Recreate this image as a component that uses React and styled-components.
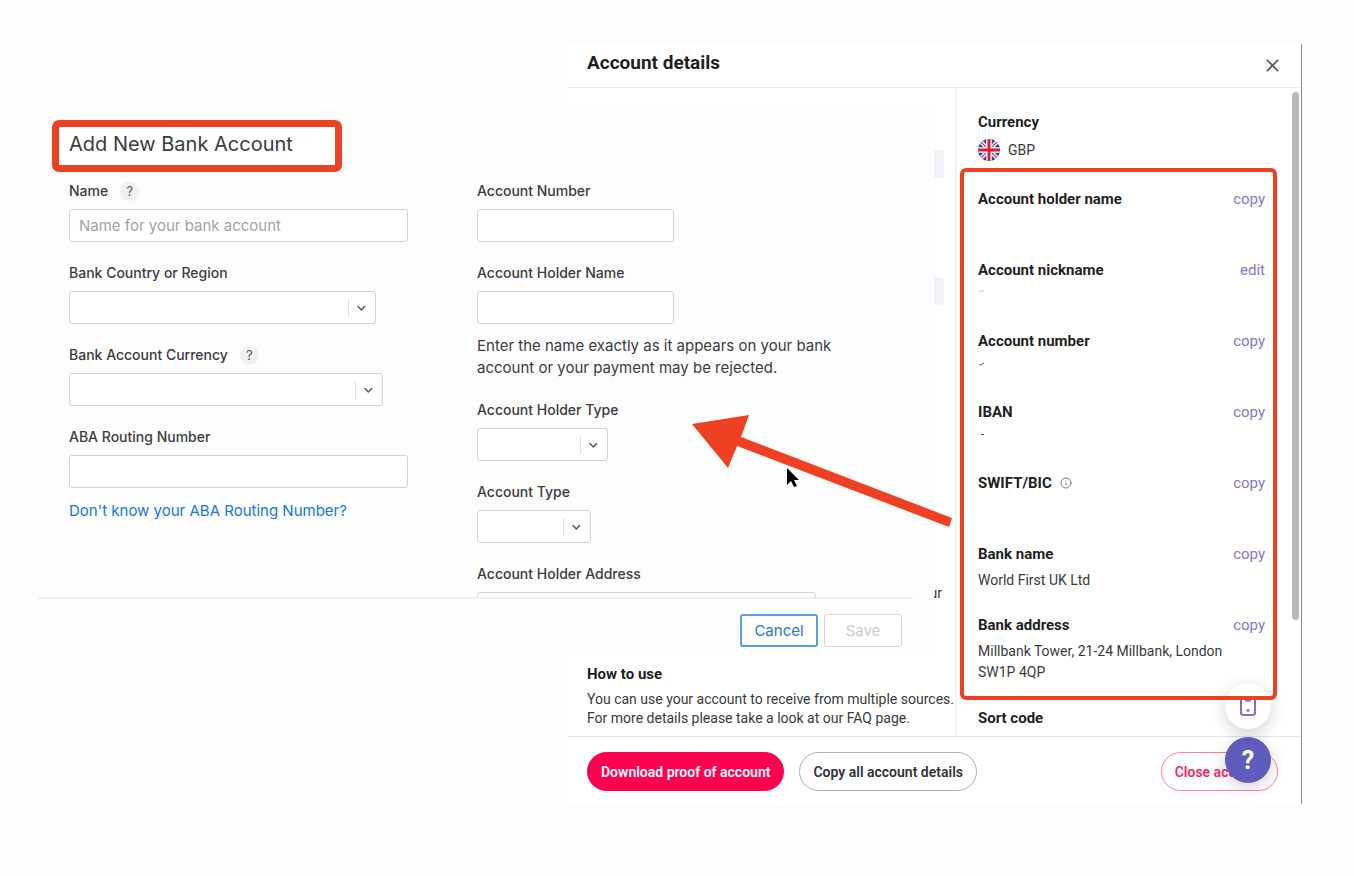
import styled, { createGlobalStyle } from "styled-components";
import { Info, X } from "lucide-react";

const GlobalStyle = createGlobalStyle`
  * {
    box-sizing: border-box;
  }

  body {
    margin: 0;
    background: #fdfdfd;
  }

  button,
  input,
  select {
    font: inherit;
    margin: 0;
  }
`;

const Stage = styled.main`
  position: relative;
  display: grid;
  grid-template-columns: 529fr 367fr 368fr;
  align-items: start;
  padding: 44px 52px 72px 38px;
`;

/* ---------- account details window ---------- */

const DetailsWindow = styled.section`
  position: relative;
  grid-column: 2 / 4;
  grid-row: 1;
  background: #fff;
  border-right: 1px solid #8a8a8a;
  font-family: Roboto, sans-serif;
  font-size: 14px;
  color: #3a3a3a;
`;

const DetailsHeader = styled.header`
  display: flex;
  align-items: center;
  justify-content: space-between;
  height: 44px;
  padding: 0 18px 0 20px;
  border-bottom: 1px solid #ececee;
`;

const DetailsTitle = styled.h1`
  margin: 0;
  padding-bottom: 6px;
  font-size: 19px;
  line-height: 24px;
  font-weight: 700;
  color: #1f1f1f;
`;

const CloseIcon = styled.button`
  display: flex;
  padding: 0;
  border: 0;
  background: none;
  color: #555;
`;

const DetailsBody = styled.div`
  display: grid;
  grid-template-columns: minmax(0, 1fr) 344px;
`;

const Summary = styled.div`
  display: flex;
  flex-direction: column;
  padding: 62px 11px 8px 20px;
  border-right: 2px solid #f3f3fa;
`;

const Skeleton = styled.div`
  height: 28px;
  margin-bottom: 99px;
  border-radius: 4px;
  background: #f2f1f8;
`;

const SummaryNote = styled.p`
  margin: auto 2px 61px 0;
  line-height: 20px;
  text-align: right;
`;

const SummaryTitle = styled.h2`
  margin: 0 0 6px;
  font-size: 15px;
  line-height: 20px;
  font-weight: 700;
  color: #1f1f1f;
`;

const SummaryText = styled.p`
  margin: 0;
  line-height: 19px;
  white-space: nowrap;
`;

const Sidebar = styled.aside`
  display: grid;
  grid-template-columns: 1fr 7px;
  column-gap: 15px;
  padding: 0 2px 8px 3px;
`;

const ScrollThumb = styled.div`
  height: 528px;
  margin-top: 4px;
  border-radius: 4px;
  background: #bababa;
`;

const SideBlock = styled.div`
  padding: ${(props) => props.$pad};
`;

const MarkedGroup = styled.div`
  position: relative;
  z-index: 2;
  display: flex;
  flex-direction: column;
  gap: 24px;
  margin-bottom: 8px;
  padding: 17px 8px 13px 14px;
  border: 4px solid #ee4023;
  border-radius: 6px;
`;

const FieldHead = styled.div`
  display: flex;
  align-items: center;
  gap: 8px;
  height: 20px;
  margin-bottom: ${(props) => (props.$last ? 0 : 6)}px;
`;

const FieldName = styled.h3`
  margin: 0;
  font-size: 15px;
  line-height: 20px;
  font-weight: 700;
  color: #1f1f1f;
`;

const FieldAction = styled.button`
  margin-left: auto;
  padding: 0;
  border: 0;
  background: none;
  font-size: 15px;
  line-height: 20px;
  color: #7f78d0;
`;

const FieldValue = styled.div`
  min-height: 21px;
  line-height: 21px;
`;

const Residue = styled.svg`
  display: block;
`;

const CurrencyValue = styled.div`
  display: flex;
  align-items: center;
  gap: 8px;
  height: 24px;
`;

const DetailsFooter = styled.footer`
  display: flex;
  gap: 15px;
  padding: 15px 23px 13px 20px;
  border-top: 1px solid #e4e4e6;
`;

const Pill = styled.button`
  height: 39px;
  padding: 0 13px;
  border: 1px solid ${(props) => props.$border};
  border-radius: 20px;
  background: ${(props) => props.$fill || "#fff"};
  color: ${(props) => props.$color};
  font-weight: 600;
  white-space: nowrap;
`;

const ClosePill = styled(Pill)`
  margin-left: auto;
`;

const FloatingTools = styled.div`
  position: absolute;
  right: 30px;
  bottom: 21px;
  display: flex;
  flex-direction: column;
  gap: 8px;
`;

const RoundTool = styled.button`
  display: flex;
  align-items: center;
  justify-content: center;
  width: 46px;
  height: 46px;
  padding: 0;
  border: 0;
  border-radius: 50%;
  background: ${(props) => props.$fill};
  box-shadow: 0 4px 16px rgba(0, 0, 0, 0.18);
  color: #fff;
  font-size: 25px;
  font-weight: 700;
`;

/* ---------- add bank account window ---------- */

const FormWindow = styled.form`
  position: relative;
  z-index: 1;
  grid-column: 1 / 3;
  grid-row: 1;
  margin-top: 65px;
  padding: 11px 21px 0 0;
  background: #fdfdfd;
  font-family: Inter, "Liberation Sans", sans-serif;
  color: #3c3c3e;
`;

const FormTitle = styled.h2`
  width: 290px;
  margin: 0 0 0 14px;
  padding: 5px 10px 9px;
  border: 7px solid #ee4023;
  border-radius: 7px;
  background: #fff;
  font-size: 20px;
  line-height: 24px;
  font-weight: 400;
`;

const FormColumns = styled.div`
  display: grid;
  grid-template-columns: 408fr 436fr;
  align-items: start;
  max-height: 425px;
  padding: 9px 0 0 31px;
  overflow: hidden;
`;

const FormColumn = styled.div`
  display: flex;
  flex-direction: column;
  gap: 21px;
`;

const Row = styled.div`
  display: flex;
  flex-direction: column;
  align-items: flex-start;
`;

const LabelLine = styled.div`
  display: flex;
  align-items: center;
  gap: 12px;
  height: 20px;
  margin-bottom: 8px;
`;

const Label = styled.label`
  font-size: 14px;
  line-height: 20px;
  font-weight: 500;
`;

const HelpBadge = styled.button`
  width: 19px;
  height: 19px;
  padding: 0;
  border: 0;
  border-radius: 50%;
  background: #f0f0f0;
  color: #555;
  font-size: 13px;
  line-height: 19px;
`;

const TextInput = styled.input`
  width: ${(props) => props.$width}px;
  height: 33px;
  padding: 0 9px;
  border: 1px solid #d2d2d2;
  border-radius: 3px;
  background: #fff;
  font-size: 15px;

  &::placeholder {
    color: #a3a3a5;
    opacity: 1;
  }
`;

const SelectBox = styled.div`
  display: flex;
  align-items: center;
  width: ${(props) => props.$width}px;
  height: 33px;
  padding-right: 7px;
  border: 1px solid #d2d2d2;
  border-radius: 3px;
  background: #fff;
`;

const BareSelect = styled.select`
  flex: 1;
  min-width: 0;
  height: 100%;
  border: 0;
  background: none;
  appearance: none;
`;

const Chevron = styled.svg`
  flex: none;
  border-left: 1px solid #dedede;
`;

const Hint = styled.p`
  max-width: 380px;
  margin: 11px 0 0;
  font-size: 15px;
  line-height: 22px;
`;

const HintLink = styled.a`
  margin-top: 12px;
  font-size: 15px;
  line-height: 22px;
  color: #1479e0;
  text-decoration: none;
`;

const FormFooter = styled.div`
  display: flex;
  justify-content: flex-end;
  gap: 6px;
  padding: 15px 11px 6px;
  border-top: 2px solid #efefef;
`;

const FormButton = styled.button`
  width: 78px;
  height: 33px;
  padding: 0;
  border: ${(props) => (props.disabled ? "1px solid #d6d6d6" : "2px solid #5a9de4")};
  border-radius: 3px;
  background: #fff;
  color: ${(props) => (props.disabled ? "#cbcbcb" : "#1f78d8")};
  font-size: 15px;
`;

/* ---------- annotation layer ---------- */

const Arrow = styled.svg`
  position: absolute;
  z-index: 3;
  top: 415px;
  right: 401px;
  pointer-events: none;
`;

const Flag = () => (
  <svg width="22" height="22" viewBox="0 0 24 24" aria-hidden="true">
    <defs>
      <clipPath id="flag-circle">
        <circle cx="12" cy="12" r="12" />
      </clipPath>
    </defs>
    <g clipPath="url(#flag-circle)">
      <rect width="24" height="24" fill="#1f4fa3" />
      <path d="M0 0L24 24M24 0L0 24" stroke="#fff" strokeWidth="4.4" />
      <path d="M0 0L24 24M24 0L0 24" stroke="#e0354b" strokeWidth="1.4" />
      <path d="M12 0V24M0 12H24" stroke="#fff" strokeWidth="6" />
      <path d="M12 0V24M0 12H24" stroke="#d81e36" strokeWidth="3.2" />
    </g>
  </svg>
);

const PhoneIcon = () => (
  <svg width="18" height="22" viewBox="0 0 18 22" fill="none" aria-hidden="true">
    <rect x="2" y="2" width="14" height="18" rx="2" stroke="#7a72cc" strokeWidth="2" />
    <path d="M6 5.5H12" stroke="#7a72cc" strokeWidth="2" />
    <circle cx="9" cy="15.5" r="1.4" fill="#7a72cc" />
  </svg>
);

const Field = ({ name, action, info, children }) => (
  <div>
    <FieldHead>
      <FieldName>{name}</FieldName>
      {info && <Info size={12} color="#777" strokeWidth={2} />}
      <FieldAction type="button">{action}</FieldAction>
    </FieldHead>
    <FieldValue>{children}</FieldValue>
  </div>
);

const Stroke = ({ d, color = "#555" }) => (
  <Residue width="8" height="21" viewBox="0 0 8 21" fill="none">
    <path d={d} stroke={color} strokeWidth="1" />
  </Residue>
);

const LabelRow = ({ id, text, help }) => (
  <LabelLine>
    <Label htmlFor={id}>{text}</Label>
    {help && (
      <HelpBadge type="button" aria-label={`About ${text}`}>
        ?
      </HelpBadge>
    )}
  </LabelLine>
);

const InputRow = ({ id, text, width, help, placeholder, children }) => (
  <Row>
    <LabelRow id={id} text={text} help={help} />
    <TextInput id={id} type="text" $width={width} placeholder={placeholder} />
    {children}
  </Row>
);

const SelectRow = ({ id, text, width, help }) => (
  <Row>
    <LabelRow id={id} text={text} help={help} />
    <SelectBox $width={width}>
      <BareSelect id={id} defaultValue="">
        <option value="" />
      </BareSelect>
      <Chevron width="20" height="18" viewBox="0 0 20 18" fill="none">
        <path
          d="M9.5 7.5L13 11L16.5 7.5"
          stroke="#555"
          strokeWidth="1.5"
          strokeLinecap="round"
          strokeLinejoin="round"
        />
      </Chevron>
    </SelectBox>
  </Row>
);

const AccountDetails = () => (
  <DetailsWindow>
    <DetailsHeader>
      <DetailsTitle>Account details</DetailsTitle>
      <CloseIcon type="button" aria-label="Close">
        <X size={21} strokeWidth={2} />
      </CloseIcon>
    </DetailsHeader>
    <DetailsBody>
      <Summary>
        <Skeleton />
        <Skeleton />
        <SummaryNote>our</SummaryNote>
        <SummaryTitle>How to use</SummaryTitle>
        <SummaryText>
          You can use your account to receive from multiple sources.
          <br />
          For more details please take a look at our FAQ page.
        </SummaryText>
      </Summary>
      <Sidebar>
        <div>
          <SideBlock $pad="24px 0 6px 18px">
            <FieldHead>
              <FieldName>Currency</FieldName>
            </FieldHead>
            <CurrencyValue>
              <Flag />
              GBP
            </CurrencyValue>
          </SideBlock>
          <MarkedGroup>
            <Field name="Account holder name" action="copy" />
            <Field name="Account nickname" action="edit">
              <Stroke d="M1 6Q3 4 6 5" color="#c4c4c4" />
            </Field>
            <Field name="Account number" action="copy">
              <Stroke d="M1 8Q3 8 6 6" />
            </Field>
            <Field name="IBAN" action="copy">
              <Stroke d="M3 6.5H6" />
            </Field>
            <Field name="SWIFT/BIC" action="copy" info />
            <Field name="Bank name" action="copy">
              World First UK Ltd
            </Field>
            <Field name="Bank address" action="copy">
              Millbank Tower, 21-24 Millbank, London
              <br />
              SW1P 4QP
            </Field>
          </MarkedGroup>
          <SideBlock $pad="0 0 0 18px">
            <FieldHead $last>
              <FieldName>Sort code</FieldName>
            </FieldHead>
          </SideBlock>
        </div>
        <ScrollThumb />
      </Sidebar>
    </DetailsBody>
    <DetailsFooter>
      <Pill type="button" $fill="#ff0051" $border="#ff0051" $color="#fff">
        Download proof of account
      </Pill>
      <Pill type="button" $border="#b0b0b0" $color="#333">
        Copy all account details
      </Pill>
      <ClosePill type="button" $border="#ff7f95" $color="#ff1f63">
        Close account
      </ClosePill>
    </DetailsFooter>
    <FloatingTools>
      <RoundTool type="button" $fill="#fff" aria-label="Mobile app">
        <PhoneIcon />
      </RoundTool>
      <RoundTool type="button" $fill="#605cbe">
        ?
      </RoundTool>
    </FloatingTools>
  </DetailsWindow>
);

const AddBankAccount = () => (
  <FormWindow>
    <FormTitle>Add New Bank Account</FormTitle>
    <FormColumns>
      <FormColumn>
        <InputRow
          id="name"
          text="Name"
          width={339}
          help
          placeholder="Name for your bank account"
        />
        <SelectRow id="country" text="Bank Country or Region" width={307} />
        <SelectRow id="currency" text="Bank Account Currency" width={314} help />
        <InputRow id="routing" text="ABA Routing Number" width={339}>
          <HintLink href="#routing">Don't know your ABA Routing Number?</HintLink>
        </InputRow>
      </FormColumn>
      <FormColumn>
        <InputRow id="number" text="Account Number" width={197} />
        <InputRow id="holder" text="Account Holder Name" width={197}>
          <Hint>
            Enter the name exactly as it appears on your bank
            <br />
            account or your payment may be rejected.
          </Hint>
        </InputRow>
        <SelectRow id="holder-type" text="Account Holder Type" width={131} />
        <SelectRow id="type" text="Account Type" width={114} />
        <InputRow id="address" text="Account Holder Address" width={339} />
      </FormColumn>
    </FormColumns>
    <FormFooter>
      <FormButton type="button">Cancel</FormButton>
      <FormButton type="button" disabled>
        Save
      </FormButton>
    </FormFooter>
  </FormWindow>
);

const App = () => (
  <>
    <GlobalStyle />
    <Stage>
      <AccountDetails />
      <AddBankAccount />
      <Arrow width="261" height="113" viewBox="0 0 261 113">
        <path d="M0 9L57 0L49 22L260 103L257 112L45 31L36 53Z" fill="#ee4023" />
        <path
          d="M95 53V70L99 66L102 72L105 71L102 65H107Z"
          fill="#000"
          stroke="#fff"
          strokeWidth="1"
          paintOrder="stroke"
        />
      </Arrow>
    </Stage>
  </>
);

export default App;
